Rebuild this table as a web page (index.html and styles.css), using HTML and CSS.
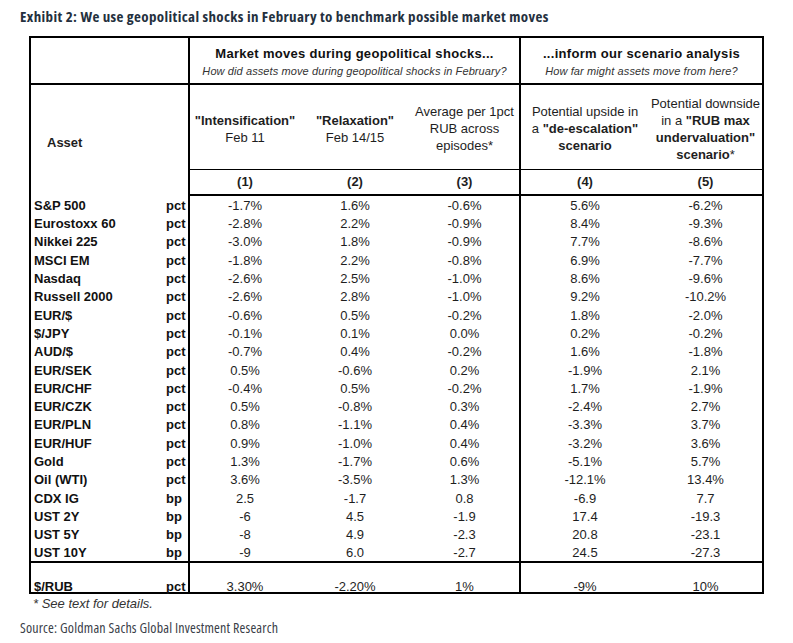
FILE: index.html
```html
<!DOCTYPE html>
<html lang="en">
<head>
<meta charset="utf-8">
<title>Exhibit 2</title>
<link rel="stylesheet" href="styles.css">
</head>
<body>
<div class="page">
  <h1 class="title">Exhibit 2: We use geopolitical shocks in February to benchmark possible market moves</h1>
  <table class="grid">
    <colgroup>
      <col class="c-name"><col class="c-unit"><col class="c-1"><col class="c-2"><col class="c-3"><col class="c-4"><col class="c-5">
    </colgroup>
    <thead>
      <tr class="h-group">
        <th colspan="2" class="div-r"></th>
        <th colspan="3" class="div-r"><span class="g-title">Market moves during geopolitical shocks...</span><span class="g-sub">How did assets move during geopolitical shocks in February?</span></th>
        <th colspan="2"><span class="g-title">...inform our scenario analysis</span><span class="g-sub">How far might assets move from here?</span></th>
      </tr>
      <tr class="h-desc">
        <th colspan="2" rowspan="2" class="asset div-r">Asset</th>
        <th class="d"><b>"Intensification"</b><br>Feb 11</th>
        <th class="d"><b>"Relaxation"</b><br>Feb 14/15</th>
        <th class="d div-r">Average per 1pct<br>RUB across<br>episodes*</th>
        <th class="d">Potential upside in<br>a <b>"de-escalation"</b><br><b>scenario</b></th>
        <th class="d">Potential downside<br>in a <b>"RUB max</b><br><b>undervaluation"</b><br><b>scenario</b>*</th>
      </tr>
      <tr class="h-num">
        <th>(1)</th><th>(2)</th><th class="div-r">(3)</th><th>(4)</th><th>(5)</th>
      </tr>
    </thead>
    <tbody>
      <tr><td class="n">S&amp;P 500</td><td class="u div-r">pct</td><td>-1.7%</td><td>1.6%</td><td class="div-r">-0.6%</td><td>5.6%</td><td>-6.2%</td></tr>
      <tr><td class="n">Eurostoxx 60</td><td class="u div-r">pct</td><td>-2.8%</td><td>2.2%</td><td class="div-r">-0.9%</td><td>8.4%</td><td>-9.3%</td></tr>
      <tr><td class="n">Nikkei 225</td><td class="u div-r">pct</td><td>-3.0%</td><td>1.8%</td><td class="div-r">-0.9%</td><td>7.7%</td><td>-8.6%</td></tr>
      <tr><td class="n">MSCI EM</td><td class="u div-r">pct</td><td>-1.8%</td><td>2.2%</td><td class="div-r">-0.8%</td><td>6.9%</td><td>-7.7%</td></tr>
      <tr><td class="n">Nasdaq</td><td class="u div-r">pct</td><td>-2.6%</td><td>2.5%</td><td class="div-r">-1.0%</td><td>8.6%</td><td>-9.6%</td></tr>
      <tr><td class="n">Russell 2000</td><td class="u div-r">pct</td><td>-2.6%</td><td>2.8%</td><td class="div-r">-1.0%</td><td>9.2%</td><td>-10.2%</td></tr>
      <tr><td class="n">EUR/$</td><td class="u div-r">pct</td><td>-0.6%</td><td>0.5%</td><td class="div-r">-0.2%</td><td>1.8%</td><td>-2.0%</td></tr>
      <tr><td class="n">$/JPY</td><td class="u div-r">pct</td><td>-0.1%</td><td>0.1%</td><td class="div-r">0.0%</td><td>0.2%</td><td>-0.2%</td></tr>
      <tr><td class="n">AUD/$</td><td class="u div-r">pct</td><td>-0.7%</td><td>0.4%</td><td class="div-r">-0.2%</td><td>1.6%</td><td>-1.8%</td></tr>
      <tr><td class="n">EUR/SEK</td><td class="u div-r">pct</td><td>0.5%</td><td>-0.6%</td><td class="div-r">0.2%</td><td>-1.9%</td><td>2.1%</td></tr>
      <tr><td class="n">EUR/CHF</td><td class="u div-r">pct</td><td>-0.4%</td><td>0.5%</td><td class="div-r">-0.2%</td><td>1.7%</td><td>-1.9%</td></tr>
      <tr><td class="n">EUR/CZK</td><td class="u div-r">pct</td><td>0.5%</td><td>-0.8%</td><td class="div-r">0.3%</td><td>-2.4%</td><td>2.7%</td></tr>
      <tr><td class="n">EUR/PLN</td><td class="u div-r">pct</td><td>0.8%</td><td>-1.1%</td><td class="div-r">0.4%</td><td>-3.3%</td><td>3.7%</td></tr>
      <tr><td class="n">EUR/HUF</td><td class="u div-r">pct</td><td>0.9%</td><td>-1.0%</td><td class="div-r">0.4%</td><td>-3.2%</td><td>3.6%</td></tr>
      <tr><td class="n">Gold</td><td class="u div-r">pct</td><td>1.3%</td><td>-1.7%</td><td class="div-r">0.6%</td><td>-5.1%</td><td>5.7%</td></tr>
      <tr><td class="n">Oil (WTI)</td><td class="u div-r">pct</td><td>3.6%</td><td>-3.5%</td><td class="div-r">1.3%</td><td>-12.1%</td><td>13.4%</td></tr>
      <tr><td class="n">CDX IG</td><td class="u div-r">bp</td><td>2.5</td><td>-1.7</td><td class="div-r">0.8</td><td>-6.9</td><td>7.7</td></tr>
      <tr><td class="n">UST 2Y</td><td class="u div-r">bp</td><td>-6</td><td>4.5</td><td class="div-r">-1.9</td><td>17.4</td><td>-19.3</td></tr>
      <tr><td class="n">UST 5Y</td><td class="u div-r">bp</td><td>-8</td><td>4.9</td><td class="div-r">-2.3</td><td>20.8</td><td>-23.1</td></tr>
      <tr><td class="n">UST 10Y</td><td class="u div-r">bp</td><td>-9</td><td>6.0</td><td class="div-r">-2.7</td><td>24.5</td><td>-27.3</td></tr>
    </tbody>
    <tfoot>
      <tr class="rub"><td class="n">$/RUB</td><td class="u div-r">pct</td><td>3.30%</td><td>-2.20%</td><td class="div-r">1%</td><td>-9%</td><td>10%</td></tr>
    </tfoot>
  </table>
  <p class="note">* See text for details.</p>
  <p class="source">Source: Goldman Sachs Global Investment Research</p>
  <div class="rule"></div>
</div>
</body>
</html>
```

FILE: styles.css
```css
* { box-sizing: border-box; }

body {
  margin: 0;
  background: #ffffff;
  font-family: "Liberation Sans", Arial, sans-serif;
  color: #1a1a1a;
}

.page {
  width: 793px;
  height: 643px;
  overflow: hidden;
}

.title {
  margin: 6px 0 0 20px;
  font-family: "Open Sans", sans-serif;
  font-stretch: 75%;
  font-weight: 700;
  font-size: 15px;
  line-height: 20px;
  letter-spacing: 0.37px;
  color: #24303e;
}

.grid {
  border-collapse: collapse;
  table-layout: fixed;
  width: 733px;
  margin: 10px 0 0 29px;
  border: 2px solid #000;
  font-size: 13px;
  color: #1e1e1e;
}

.c-name { width: 134px; }
.c-unit { width: 25px; }
.c-1 { width: 111px; }
.c-2 { width: 110px; }
.c-3 { width: 110px; }
.c-4 { width: 129px; }
.c-5 { width: 114px; }

th, td {
  padding: 0;
  text-align: center;
  white-space: nowrap;
}

th { font-weight: 400; }

.div-r { border-right: 2px solid #000; }

.h-group th {
  height: 47px;
  vertical-align: top;
  padding-top: 7px;
  border-bottom: 2px solid #000;
}

.g-title {
  display: block;
  font-weight: 700;
  font-size: 13px;
  letter-spacing: 0.3px;
  line-height: 17px;
  color: #111;
}

.g-sub {
  display: block;
  font-style: italic;
  font-size: 11px;
  letter-spacing: 0.1px;
  line-height: 18px;
  color: #333;
}

.h-desc th {
  height: 85px;
  line-height: 17px;
  vertical-align: middle;
  padding-top: 4px;
}

.h-desc th.d { border-bottom: 1px solid #000; }

.h-desc th b { font-weight: 700; }

.asset {
  text-align: left;
  padding-left: 16px !important;
  font-weight: 700 !important;
}

.h-num th {
  height: 26px;
  font-weight: 700;
  border-bottom: 2px solid #000;
}

tbody td {
  height: 18.3px;
  line-height: 16px;
  padding-top: 2px;
}

td.n {
  text-align: left;
  padding-left: 3px;
  font-weight: 700;
  color: #111;
}

td.u {
  text-align: left;
  padding-left: 2px;
  font-weight: 700;
  color: #111;
}

.rub td {
  height: 31px;
  vertical-align: bottom;
  padding-bottom: 0;
  border-top: 2px solid #000;
  line-height: 11px;
}

.note {
  margin: 2px 0 0 33px;
  font-style: italic;
  font-size: 13px;
  line-height: 16px;
  color: #333;
}

.source {
  margin: 8px 0 0 20px;
  font-family: "Open Sans", sans-serif;
  font-stretch: 75%;
  font-size: 14px;
  letter-spacing: 0.17px;
  line-height: 16px;
  color: #3a4048;
}

.rule {
  margin-top: 12px;
  border-top: 1.5px solid #1a1a1a;
}
```
